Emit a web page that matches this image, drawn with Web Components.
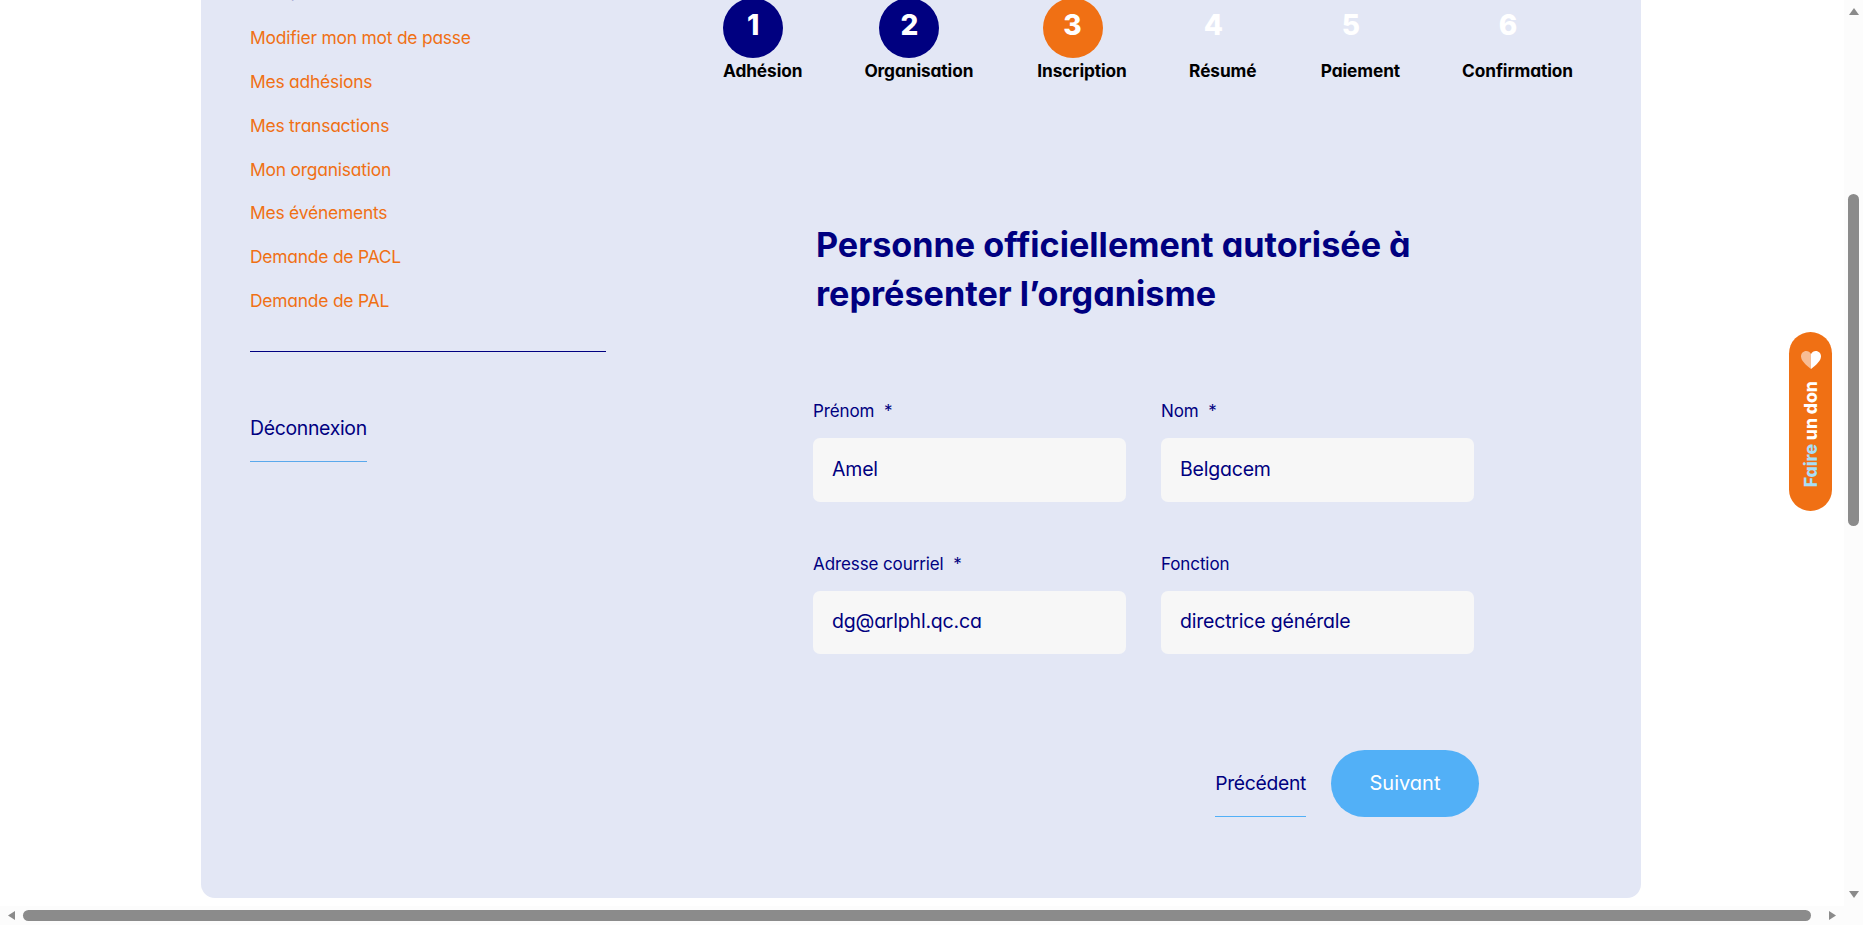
<!DOCTYPE html>
<html lang="fr">
<head>
<meta charset="utf-8">
<title>Inscription</title>
<style>
  html, body { margin: 0; height: 100%; overflow: hidden; background: #fff; }
  body { font-family: Inter, "Noto Sans", sans-serif; font-feature-settings: "cv11" 1; color: #000080; }
</style>
</head>
<body>
<page-shell>
  <member-panel>
    <side-nav slot="side">
      <nav-link current>Mon profil</nav-link>
      <nav-link>Modifier mon mot de passe</nav-link>
      <nav-link>Mes adhésions</nav-link>
      <nav-link>Mes transactions</nav-link>
      <nav-link>Mon organisation</nav-link>
      <nav-link>Mes événements</nav-link>
      <nav-link>Demande de PACL</nav-link>
      <nav-link>Demande de PAL</nav-link>
    </side-nav>
    <step-bar>
      <step-item num="1" state="done">Adhésion</step-item>
      <step-item num="2" state="done">Organisation</step-item>
      <step-item num="3" state="current" style="margin-left: 2px">Inscription</step-item>
      <step-item num="4" style="margin-left: -5.5px">Résumé</step-item>
      <step-item num="5" style="margin-left: -3.5px">Paiement</step-item>
      <step-item num="6">Confirmation</step-item>
    </step-bar>
    <contact-form heading="Personne officiellement autorisée à représenter l’organisme">
      <form-field label="Prénom" required value="Amel"></form-field>
      <form-field label="Nom" required value="Belgacem"></form-field>
      <form-field label="Adresse courriel" required value="dg@arlphl.qc.ca"></form-field>
      <form-field label="Fonction" value="directrice générale"></form-field>
    </contact-form>
  </member-panel>
  <don-button></don-button>
</page-shell>

<script>
window.customElements.define('page-shell', class PageShell extends HTMLElement {
  constructor() {
    super()
    this.attachShadow({ mode: 'open' })
    this.shadowRoot.innerHTML = `
      <style>
        :host { display: grid; grid-template-columns: 1fr 19px; grid-template-rows: 1fr 19px; width: 100vw; height: 100vh; }
        #view { overflow: hidden; position: relative; }
        .bar { background: #fcfcfc; position: relative; }
        #v { display: flex; flex-direction: column; align-items: center; justify-content: space-between; padding: 8px 0; box-sizing: border-box; }
        #v .thumb { position: absolute; left: 4px; top: 194px; width: 11px; height: 332px; }
        #h { display: flex; align-items: center; justify-content: space-between; padding: 0 8px; box-sizing: border-box; }
        #h .thumb { position: absolute; left: 23px; top: 4px; width: 1788px; height: 11px; }
        .thumb { background: #8b8b8b; border-radius: 6px; }
        svg { display: block; fill: #8b8b8b; }
      </style>
      <div id="view"><slot></slot></div>
      <div id="v" class="bar">
        <svg width="10" height="7" viewBox="0 0 10 7"><path d="M5 0 10 7H0z"/></svg>
        <div class="thumb"></div>
        <svg width="10" height="7" viewBox="0 0 10 7"><path d="M0 0H10L5 7z"/></svg>
      </div>
      <div id="h" class="bar">
        <svg width="7" height="9" viewBox="0 0 7 9"><path d="M7 0V9L0 4.5z"/></svg>
        <div class="thumb"></div>
        <svg width="7" height="9" viewBox="0 0 7 9"><path d="M0 0 7 4.5 0 9z"/></svg>
      </div>
      <div class="bar"></div>`
  }
})

window.customElements.define('member-panel', class MemberPanel extends HTMLElement {
  constructor() {
    super()
    this.attachShadow({ mode: 'open' })
    this.shadowRoot.innerHTML = `
      <style>
        :host {
          display: grid;
          grid-template-columns: 356px 1fr;
          width: 1440px;
          height: 898px;
          margin-left: 201px;
          padding-left: 49px;
          box-sizing: border-box;
          background: #e3e7f5;
          border-radius: 0 0 14px 14px;
        }
        main { padding-left: 117px; min-width: 0; }
      </style>
      <slot name="side"></slot>
      <main><slot></slot></main>`
  }
})

window.customElements.define('side-nav', class SideNav extends HTMLElement {
  constructor() {
    super()
    this.attachShadow({ mode: 'open' })
    this.shadowRoot.innerHTML = `
      <style>
        :host { display: block; margin-top: -31.5px; }
        #links { display: flex; flex-direction: column; padding-bottom: 28px; border-bottom: 1px solid #000080; }
        #out { display: inline-block; margin-top: 63px; padding-bottom: 20px; border-bottom: 1px solid #5aa9ec; color: #000080; font-size: 19.4px; line-height: 26px; letter-spacing: -.3px; }
      </style>
      <div id="links"><slot></slot></div>
      <a id="out">Déconnexion</a>`
  }
})

window.customElements.define('nav-link', class NavLink extends HTMLElement {
  constructor() {
    super()
    this.attachShadow({ mode: 'open' })
    this.shadowRoot.innerHTML = `
      <style>
        :host { display: block; height: 43.8px; line-height: 43.8px; font-size: 17.4px; letter-spacing: -.2px; color: #f07014; white-space: nowrap; }
        :host([current]) { color: #000080; height: 47.8px; }
      </style>
      <slot></slot>`
  }
})

window.customElements.define('step-bar', class StepBar extends HTMLElement {
  constructor() {
    super()
    this.attachShadow({ mode: 'open' })
    this.shadowRoot.innerHTML = `
      <style>
        :host { display: flex; gap: 62px; margin-top: -2px; }
      </style>
      <slot></slot>`
  }
})

window.customElements.define('step-item', class StepItem extends HTMLElement {
  constructor() {
    super()
    this.attachShadow({ mode: 'open' })
    const num = this.getAttribute('num')
    this.shadowRoot.innerHTML = `
      <style>
        :host { display: flex; flex-direction: column; align-items: center; }
        #dot {
          width: 60px; height: 60px; margin-right: 19px; padding-bottom: 6px; box-sizing: border-box;
          display: flex; align-items: center; justify-content: center; border-radius: 50%;
          color: #fff; font-size: 28px; font-weight: 800;
        }
        :host([state="done"]) #dot { background: #000080; }
        :host([state="current"]) #dot { background: #f07014; }
        #label { margin-top: 2px; line-height: 22px; font-size: 17.3px; font-weight: 700; color: #000; letter-spacing: -.1px; white-space: nowrap; }
      </style>
      <div id="dot">${num}</div>
      <div id="label"><slot></slot></div>`
  }
})

window.customElements.define('contact-form', class ContactForm extends HTMLElement {
  constructor() {
    super()
    this.attachShadow({ mode: 'open' })
    this.shadowRoot.innerHTML = `
      <style>
        :host { display: block; margin: 138px 0 0 90px; width: 661px; }
        h1 { margin: 0 0 82px 3px; font-size: 34.2px; line-height: 49px; font-weight: 700; color: #000080; letter-spacing: 0; width: 640px; }
        #grid { display: grid; grid-template-columns: 313px 313px; column-gap: 35px; row-gap: 51px; }
        #actions { display: flex; justify-content: flex-end; align-items: flex-start; gap: 25px; margin: 96px -5px 0 0; }
        #prev { color: #000080; font-size: 19.3px; line-height: 26px; letter-spacing: -.3px; padding: 20px 0; border-bottom: 1px solid #52b0f7; }
        #next { width: 148px; height: 67px; border-radius: 34px; background: #52b0f7; color: #fff; font-size: 20px; display: flex; align-items: center; justify-content: center; padding-bottom: 2px; box-sizing: border-box; }
      </style>
      <h1>${this.getAttribute('heading')}</h1>
      <div id="grid"><slot></slot></div>
      <div id="actions"><a id="prev">Précédent</a><a id="next">Suivant</a></div>`
  }
})

window.customElements.define('form-field', class FormField extends HTMLElement {
  constructor() {
    super()
    this.attachShadow({ mode: 'open' })
    const star = this.hasAttribute('required') ? '<span>*</span>' : ''
    this.shadowRoot.innerHTML = `
      <style>
        :host { display: block; }
        label { display: block; height: 38px; line-height: 22px; font-size: 17px; letter-spacing: -.1px; color: #000080; }
        span { margin-left: 5px; }
        #value {
          display: flex; align-items: center; height: 63.5px; padding: 0 19px 2px; box-sizing: border-box;
          background: #f7f7f7; border-radius: 7px; font-size: 19.5px; letter-spacing: -.2px; color: #000080;
        }
      </style>
      <label>${this.getAttribute('label')} ${star}</label>
      <div id="value">${this.getAttribute('value')}</div>`
  }
})

window.customElements.define('don-button', class DonButton extends HTMLElement {
  constructor() {
    super()
    this.attachShadow({ mode: 'open' })
    this.shadowRoot.innerHTML = `
      <style>
        :host {
          position: absolute; left: 1789px; top: 332px; width: 43px; height: 179px;
          display: flex; flex-direction: column; align-items: center; gap: 12px; padding-top: 19px; box-sizing: border-box;
          background: #f07014; border-radius: 22px;
        }
        #text { writing-mode: vertical-rl; transform: rotate(180deg); font-size: 17.5px; font-weight: 800; color: #fff; line-height: 20px; white-space: nowrap; }
        b { color: #a8def7; font-weight: 800; }
      </style>
      <svg width="20" height="18" viewBox="0 0 20 18">
        <path fill="#f8bd94" d="M10 3C9 1 7.200 0 5.300 0 2.300 0 0 2.300 0 5.300 0 10 5 14 10 18z"/>
        <path fill="#fff" d="M10 3C11 1 12.800 0 14.700 0 17.700 0 20 2.300 20 5.300 20 10 15 14 10 18z"/>
      </svg>
      <div id="text"><b>Faire</b> un don</div>`
  }
})
</script>
</body>
</html>
